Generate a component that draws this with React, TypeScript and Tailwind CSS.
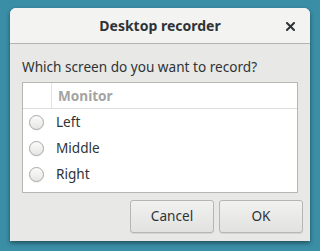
const rows = ["Left", "Middle", "Right"];

function Radio() {
  return (
    <span className="block w-[15px] h-[15px] rounded-full border border-[#a8a8a5] bg-gradient-to-b from-[#fbfbfb] to-[#e6e6e4] shadow-[0_1px_0_rgba(0,0,0,0.05)]" />
  );
}

export default function App() {
  return (
    <div
      className="w-[320px] h-[251px] bg-[#3a8ea6] pt-2 pl-[10px] overflow-hidden"
      style={{ fontFamily: '"Noto Sans", "Open Sans", sans-serif' }}
    >
      <div className="w-[300px] h-[233px] rounded-t-[6px] bg-[#e8e8e7] shadow-[0_2px_4px_rgba(0,0,0,0.45)] flex flex-col">
        {/* title bar */}
        <div className="h-[36px] flex items-center justify-center relative rounded-t-[6px] bg-[#f3f3f2] border-b border-[#b3b3b0] shrink-0">
          <span className="text-[14px] font-bold text-[#2e3436]">Desktop recorder</span>
          <svg className="absolute right-[15px] top-[14px]" width="9" height="9" viewBox="0 0 9 9">
            <path d="M1 1L8 8M8 1L1 8" stroke="#2e3436" strokeWidth="2" strokeLinecap="square" />
          </svg>
        </div>

        <div className="flex flex-col px-3 pt-[14px]">
          <p className="text-[13.6px] text-[#2e3436] leading-[18px]">Which screen do you want to record?</p>

          <div className="mt-[6px] w-[276px] h-[111px] bg-white border border-[#b6b6b3] flex flex-col">
            <div className="h-[26px] flex border-b border-[#dededd] shrink-0">
              <div className="w-[29px] border-r border-[#e2e2e1]" />
              <span className="pl-[6px] text-[13.6px] font-bold text-[#a4a4a2] leading-[25px]">Monitor</span>
            </div>
            {rows.map((r) => (
              <div key={r} className="h-[26px] flex items-center pl-[6px] gap-[12px] pt-[1px]">
                <Radio />
                <span className="text-[13.6px] text-[#2e3436]">{r}</span>
              </div>
            ))}
          </div>

          <div className="flex justify-end gap-[5px] mt-[7px] -mr-[5px]">
            {["Cancel", "OK"].map((b) => (
              <button
                key={b}
                className="w-[84px] h-[33px] rounded-[3px] border border-[#b6b6b3] bg-gradient-to-b from-[#f1f1f0] to-[#e2e2e0] text-[13.6px] text-[#2e3436] shadow-[0_1px_0_rgba(0,0,0,0.08)]"
              >
                {b}
              </button>
            ))}
          </div>
        </div>
      </div>
    </div>
  );
}
